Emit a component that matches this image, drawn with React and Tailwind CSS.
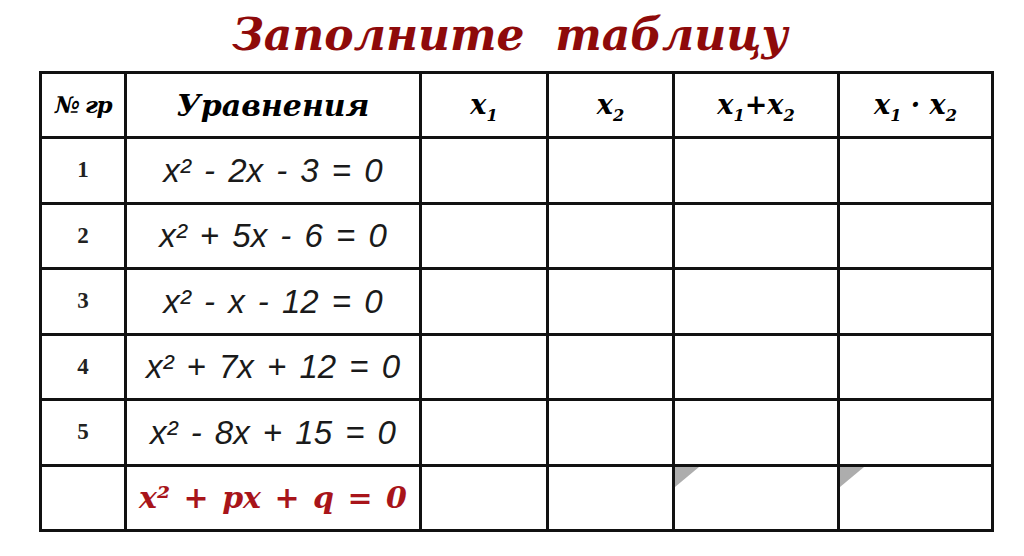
const rows = [
  { n: '1', a: 'x² - 2x - 3 = 0' },
  { n: '2', a: 'x² + 5x - 6 = 0' },
  { n: '3', a: 'x² - x - 12 = 0' },
  { n: '4', a: 'x² + 7x + 12 = 0' },
  { n: '5', a: 'x² - 8x + 15 = 0' },
]

const serif = { fontFamily: '"DejaVu Serif", "Liberation Serif", serif' }

function Corner() {
  return (
    <div className="absolute left-0 top-0 w-0 h-0 border-t-[20px] border-r-[24px] border-t-[#adadad] border-r-transparent" />
  )
}

function Sub({ base, sub }) {
  return (
    <span>
      {base}
      <sub className="text-[60%] align-[-0.2em]">{sub}</sub>
    </span>
  )
}

export default function App() {
  const cell = 'border-[3px] border-[#111]'
  return (
    <div className="w-[1024px] h-[556px] bg-white overflow-hidden">
      <div className="h-[70px] flex items-center justify-center pr-[4px]">
        <h1 className="text-[44px] font-bold italic text-[#8e0a0a] leading-none whitespace-pre" style={serif}>
          Заполните  таблицу
        </h1>
      </div>
      <table className="ml-[39px] mt-[1px] w-[952px] table-fixed border-collapse">
        <colgroup>
          <col className="w-[85px]" />
          <col className="w-[295px]" />
          <col className="w-[127px]" />
          <col className="w-[126px]" />
          <col className="w-[165px]" />
          <col className="w-[154px]" />
        </colgroup>
        <thead>
          <tr className="h-[65px] font-bold italic text-black" style={serif}>
            <th className={`${cell} text-[23px] tracking-[-1.5px] whitespace-nowrap px-0`}>№ гр</th>
            <th className={`${cell} text-[30px]`}>Уравнения</th>
            <th className={`${cell} text-[27px]`}><Sub base="x" sub="1" /></th>
            <th className={`${cell} text-[27px]`}><Sub base="x" sub="2" /></th>
            <th className={`${cell} text-[27px]`}><Sub base="x" sub="1" />+<Sub base="x" sub="2" /></th>
            <th className={`${cell} text-[27px]`}><Sub base="x" sub="1" /> · <Sub base="x" sub="2" /></th>
          </tr>
        </thead>
        <tbody>
          {rows.map(r => (
            <tr key={r.n} className="h-[65.5px]">
              <td className={`${cell} text-center font-bold text-[23px] text-[#222]`} style={{ fontFamily: '"Liberation Serif", serif' }}>{r.n}</td>
              <td className={`${cell} text-center italic text-[33px] text-[#1a1a1a] whitespace-nowrap [word-spacing:4px]`} style={{ fontFamily: '"Liberation Sans", Arial, sans-serif' }}>
                {r.a}
              </td>
              <td className={cell}></td>
              <td className={cell}></td>
              <td className={cell}></td>
              <td className={cell}></td>
            </tr>
          ))}
          <tr className="h-[65.5px]">
            <td className={cell}></td>
            <td className={`${cell} text-center font-bold italic text-[30px] text-[#a8141a] whitespace-nowrap [word-spacing:3px]`} style={serif}>
              x² + px + q = 0
            </td>
            <td className={cell}></td>
            <td className={cell}></td>
            <td className={`${cell} relative p-0`}><Corner /></td>
            <td className={`${cell} relative p-0`}><Corner /></td>
          </tr>
        </tbody>
      </table>
    </div>
  )
}
